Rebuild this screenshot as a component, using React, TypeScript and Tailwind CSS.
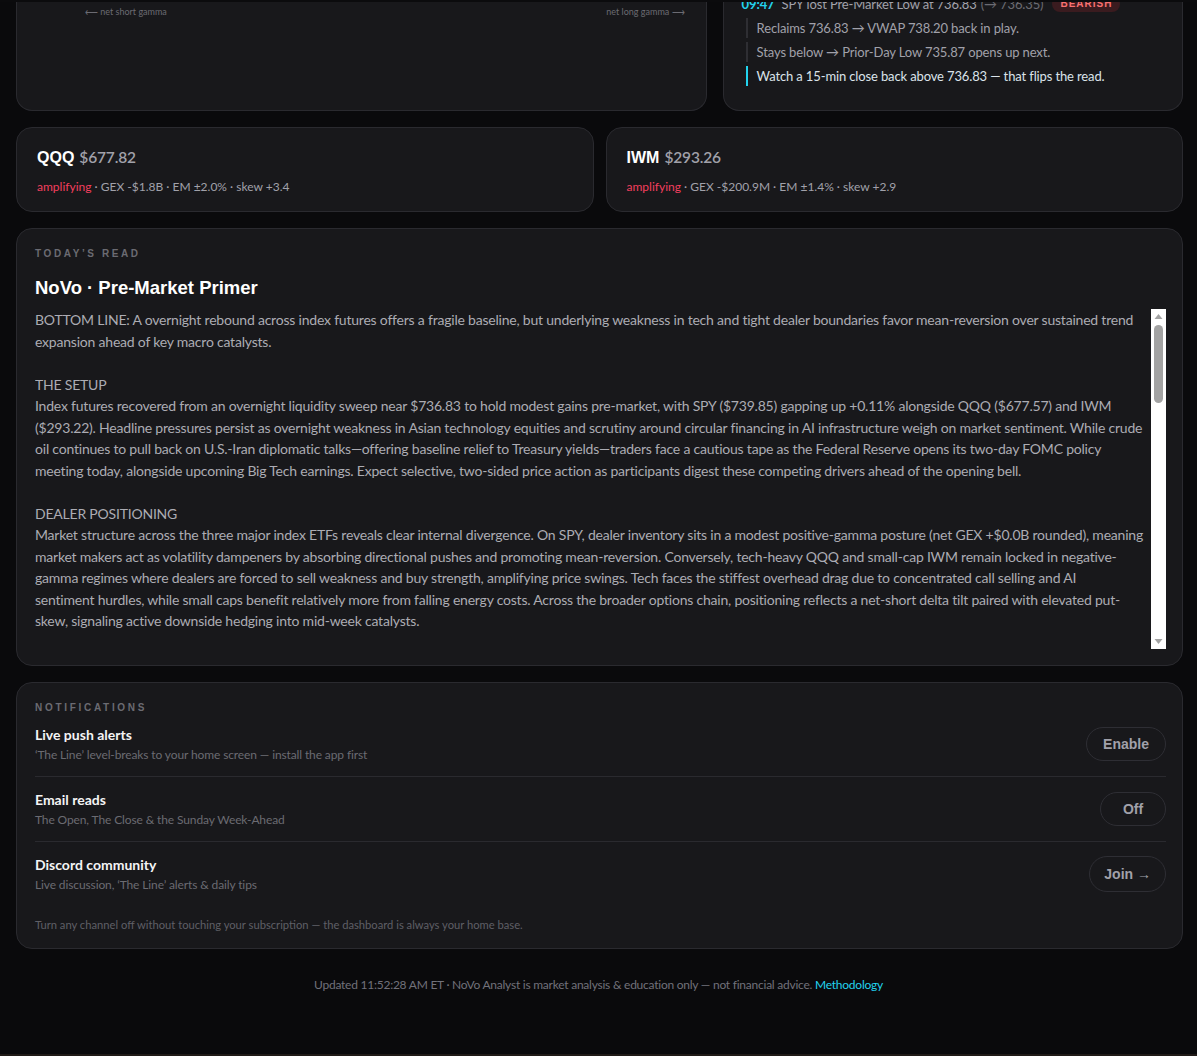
import React from "react";

const display = "font-['Liberation_Sans',Arial,sans-serif]";

const setups = [
  { text: "Reclaims 736.83 → VWAP 738.20 back in play.", active: false },
  { text: "Stays below → Prior-Day Low 735.87 opens up next.", active: false },
  { text: "Watch a 15-min close back above 736.83 — that flips the read.", active: true },
];

const tickers = [
  { sym: "QQQ", price: "$677.82", stats: "GEX -$1.8B · EM ±2.0% · skew +3.4" },
  { sym: "IWM", price: "$293.26", stats: "GEX -$200.9M · EM ±1.4% · skew +2.9" },
];

const channels = [
  { title: "Live push alerts", sub: "‘The Line’ level-breaks to your home screen — install the app first", action: "Enable", btn: "h-[34px] px-4" },
  { title: "Email reads", sub: "The Open, The Close & the Sunday Week-Ahead", action: "Off", btn: "h-[34px] px-4" },
  { title: "Discord community", sub: "Live discussion, ‘The Line’ alerts & daily tips", action: "Join →", btn: "h-[36px] px-[14px]" },
];

const primer = `BOTTOM LINE: A overnight rebound across index futures offers a fragile baseline, but underlying weakness in tech and tight dealer boundaries favor mean-reversion over sustained trend expansion ahead of key macro catalysts.

THE SETUP
Index futures recovered from an overnight liquidity sweep near $736.83 to hold modest gains pre-market, with SPY ($739.85) gapping up +0.11% alongside QQQ ($677.57) and IWM ($293.22). Headline pressures persist as overnight weakness in Asian technology equities and scrutiny around circular financing in AI infrastructure weigh on market sentiment. While crude oil continues to pull back on U.S.-Iran diplomatic talks—offering baseline relief to Treasury yields—traders face a cautious tape as the Federal Reserve opens its two-day FOMC policy meeting today, alongside upcoming Big Tech earnings. Expect selective, two-sided price action as participants digest these competing drivers ahead of the opening bell.

DEALER POSITIONING
Market structure across the three major index ETFs reveals clear internal divergence. On SPY, dealer inventory sits in a modest positive-gamma posture (net GEX +$0.0B rounded), meaning market makers act as volatility dampeners by absorbing directional pushes and promoting mean-reversion. Conversely, tech-heavy QQQ and small-cap IWM remain locked in negative-gamma regimes where dealers are forced to sell weakness and buy strength, amplifying price swings. Tech faces the stiffest overhead drag due to concentrated call selling and AI
sentiment hurdles, while small caps benefit relatively more from falling energy costs. Across the broader options chain, positioning reflects a net-short delta tilt paired with elevated put-skew, signaling active downside hedging into mid-week catalysts.

KEY LEVELS
Pre-Market Low 736.83 is the pivot. Above it, VWAP 738.20 and the overnight high come back into play; below it, Prior-Day Low 735.87 opens up next.`;

function Scrollbar() {
  return (
    <div className="flex w-[15px] shrink-0 flex-col items-center bg-white py-[4px]">
      <svg width="9" height="7" viewBox="0 0 9 7" className="shrink-0">
        <path d="M4.5 1 L8.5 6 L0.5 6 Z" fill="#a3a3a3" />
      </svg>
      <div className="mt-[5px] h-[78px] w-[9px] rounded-full bg-[#a3a3a3]" />
      <div className="flex-1" />
      <svg width="9" height="7" viewBox="0 0 9 7" className="shrink-0">
        <path d="M0.5 1 L8.5 1 L4.5 6 Z" fill="#a3a3a3" />
      </svg>
    </div>
  );
}

export default function App(): React.JSX.Element {
  return (
    <div className="flex h-[1056px] flex-col overflow-hidden bg-[#0a0a0c] font-['Lato','Noto_Sans',sans-serif]">
      <div className="fixed inset-x-0 top-0 h-[2px] bg-[#0b0b0d]" />

      <div className="ml-4 mr-[14px] flex flex-col gap-4">
        {/* top row, scrolled past */}
        <div className="grid h-[111px] grid-cols-[3fr_2fr] gap-4">
          <div className="rounded-b-2xl border border-t-0 border-[#2a2a2f] bg-[#18181b]">
            <div className="flex justify-between pl-[68px] pr-[21px] pt-[6px] text-[9px] leading-3 text-[#6b6b72]">
              <span>⟵ net short gamma</span>
              <span>net long gamma ⟶</span>
            </div>
          </div>

          <div className="rounded-b-2xl border border-t-0 border-[#2a2a2f] bg-[#18181b] pl-[18px]">
            <div className="-mt-[6px] flex flex-col gap-1 text-[13px] tracking-[-0.01em]">
              <div className="flex h-5 items-center leading-5">
                <span className="font-bold text-[#22d3ee]">09:47</span>
                <span className="ml-[7px] text-[#a1a1aa]">SPY lost Pre-Market Low at 736.83</span>
                <span className="ml-1 text-[#6b6b72]">(→ 736.35)</span>
                <span className={`ml-[9px] rounded-full bg-[#3a1b1f] px-2 text-[10px] font-bold leading-4 tracking-[0.1em] text-[#f87171] ${display}`}>
                  BEARISH
                </span>
              </div>
              {setups.map((s) => (
                <div
                  key={s.text}
                  className={`ml-1 h-5 border-l-2 pl-[9px] leading-5 ${
                    s.active ? "border-[#22d3ee] text-[#dbe3ea]" : "border-[#2e2e33] text-[#a1a1aa]"
                  }`}
                >
                  {s.text}
                </div>
              ))}
            </div>
          </div>
        </div>

        {/* tickers */}
        <div className="grid grid-cols-2 gap-3">
          {tickers.map((t) => (
            <div key={t.sym} className="rounded-2xl border border-[#2a2a2f] bg-[#18181b] px-[20px] pb-4 pt-[19px]">
              <div className="flex items-baseline gap-[5px] leading-5">
                <span className={`text-[16px] font-black text-white ${display}`}>{t.sym}</span>
                <span className="text-[15.5px] font-semibold tracking-[-0.01em] text-[#a1a1aa]">{t.price}</span>
              </div>
              <div className="mt-[11px] text-[12px] leading-4 text-[#a1a1aa]">
                <span className="text-[#f43f5e]">amplifying</span> · {t.stats}
              </div>
            </div>
          ))}
        </div>

        {/* today's read */}
        <div className="rounded-2xl border border-[#2a2a2f] bg-[#18181b] pb-4 pl-[18px] pr-4 pt-[18px]">
          <div className={`text-[10px] font-bold leading-[14px] tracking-[0.26em] text-[#6b6b72] ${display}`}>TODAY’S READ</div>
          <h2 className={`mt-[15px] text-[18.5px] font-bold leading-6 text-white ${display}`}>NoVo · Pre-Market Primer</h2>
          <div className="mt-[9px] flex h-[340px] overflow-hidden">
            <div className="flex-1 whitespace-pre-line text-[14px] leading-[21.5px] tracking-[-0.015em] text-[#acacb3]">{primer}</div>
            <Scrollbar />
          </div>
        </div>

        {/* notifications */}
        <div className="rounded-2xl border border-[#2a2a2f] bg-[#18181b] pb-[15px] pl-[18px] pr-4 pt-[18px]">
          <div className={`text-[10px] font-bold leading-[14px] tracking-[0.27em] text-[#6b6b72] ${display}`}>NOTIFICATIONS</div>
          <div className="-mt-[3px] flex flex-col">
            {channels.map((c, i) => (
              <div
                key={c.title}
                className={`flex items-center justify-between py-[13px] ${i < channels.length - 1 ? "border-b border-[#2a2a2f]" : ""}`}
              >
                <div>
                  <div className="text-[14px] font-bold leading-5 text-[#f4f4f5]">{c.title}</div>
                  <div className="mt-[2px] text-[12px] leading-4 tracking-[-0.01em] text-[#6b6b72]">{c.sub}</div>
                </div>
                <button
                  className={`${c.btn} min-w-[66px] rounded-full border border-[#2e2e34] text-[14px] font-bold text-[#a1a1aa] ${display}`}
                >
                  {c.action}
                </button>
              </div>
            ))}
          </div>
          <p className="mt-[11px] text-[11.2px] leading-4 text-[#5f5f66]">
            Turn any channel off without touching your subscription — the dashboard is always your home base.
          </p>
        </div>
      </div>

      <footer className="mt-7 text-center text-[12px] leading-4 tracking-[-0.02em] text-[#71717a]">
        Updated 11:52:28 AM ET · NoVo Analyst is market analysis &amp; education only — not financial advice.{" "}
        <a className="text-[#22d3ee]">Methodology</a>
      </footer>

      <div className="mt-auto h-[2px] shrink-0 bg-[#201a17]" />
    </div>
  );
}
